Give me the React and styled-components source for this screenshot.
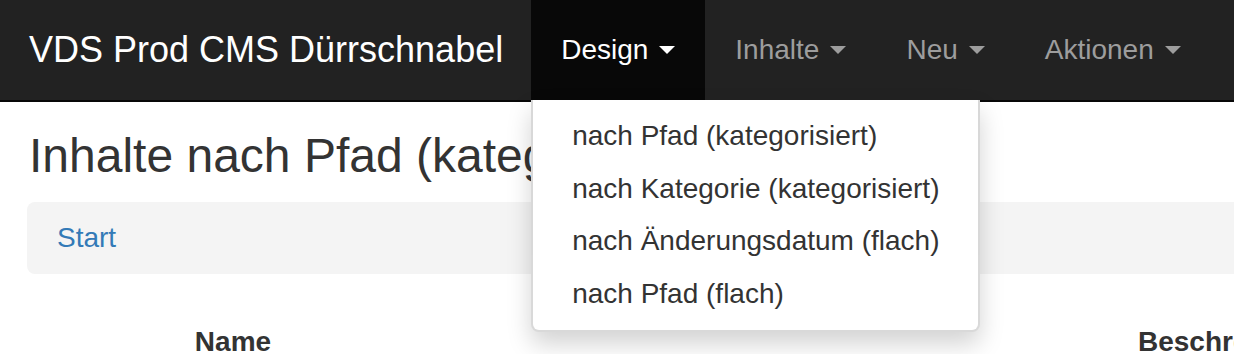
import React from "react";
import styled, { createGlobalStyle } from "styled-components";

const Global = createGlobalStyle`
  html, body { margin: 0; padding: 0; overflow: hidden; background: #fff; }
  body { font-family: "Liberation Sans", Arial, sans-serif; color: #333; }
  * { box-sizing: border-box; }
`;

const Navbar = styled.nav`
  position: relative;
  height: 102px;
  background: #222;
  border-bottom: 2px solid #080808;
  display: flex;
  align-items: stretch;
`;

const Brand = styled.a`
  display: flex;
  align-items: center;
  padding: 0 28px 0 29px;
  font-size: 36px;
  color: #fff;
  text-decoration: none;
  white-space: nowrap;
`;

const NavList = styled.ul`
  display: flex;
  margin: 0;
  padding: 0;
  list-style: none;
`;

const NavItem = styled.li`
  position: relative;
  display: flex;
  align-items: center;
  height: 100px;
  padding: 0 30px;
  font-size: 28px;
  white-space: nowrap;
  color: ${(p) => (p.$active ? "#fff" : "#9d9d9d")};
  background: ${(p) => (p.$active ? "#080808" : "transparent")};
`;

const Caret = styled.span`
  display: inline-block;
  width: 0;
  height: 0;
  margin-left: 11px;
  border-top: 8px solid currentColor;
  border-left: 8px solid transparent;
  border-right: 8px solid transparent;
`;

const Menu = styled.ul`
  position: absolute;
  top: 100px;
  left: 0;
  z-index: 10;
  margin: 0;
  padding: 10px 0;
  list-style: none;
  background: #fff;
  border: 2px solid rgba(0, 0, 0, 0.15);
  border-top: 0;
  border-radius: 0 0 8px 8px;
  box-shadow: 0 12px 24px rgba(0, 0, 0, 0.175);
`;

const MenuItem = styled.li`
  padding: 6px 38px 6px 39px;
  font-size: 28px;
  line-height: 40.6px;
  color: #333;
  white-space: nowrap;
`;

const Container = styled.main`
  padding: 0 0 0 27px;
  width: 1500px;
`;

const Title = styled.h1`
  margin: 28px 0 19px 2px;
  font-size: 48px;
  font-weight: 400;
  line-height: 1.1;
  color: #333;
`;

const Breadcrumb = styled.div`
  height: 72px;
  padding: 0 30px;
  display: flex;
  align-items: center;
  background: #f4f4f4;
  border-radius: 8px;
`;

const Crumb = styled.a`
  font-size: 28px;
  color: #337ab7;
  text-decoration: none;
`;

const TableHead = styled.div`
  display: grid;
  grid-template-columns: 412px 1fr;
  margin-top: 40px;
`;

const Th = styled.div`
  padding: 8px 16px;
  font-size: 28px;
  font-weight: 700;
  line-height: 40px;
  color: #333;
  text-align: ${(p) => p.$align || "left"};
  padding-left: ${(p) => p.$indent || 16}px;
`;

const items = [
  "nach Pfad (kategorisiert)",
  "nach Kategorie (kategorisiert)",
  "nach Änderungsdatum (flach)",
  "nach Pfad (flach)",
];

export default function App() {
  return (
    <>
      <Global />
      <Navbar>
        <Brand>VDS Prod CMS Dürrschnabel</Brand>
        <NavList>
          <NavItem $active>
            Design
            <Caret />
            <Menu>
              {items.map((t) => (
                <MenuItem key={t}>{t}</MenuItem>
              ))}
            </Menu>
          </NavItem>
          <NavItem>
            Inhalte
            <Caret />
          </NavItem>
          <NavItem>
            Neu
            <Caret />
          </NavItem>
          <NavItem>
            Aktionen
            <Caret />
          </NavItem>
        </NavList>
      </Navbar>
      <Container>
        <Title>Inhalte nach Pfad (kategorisiert)</Title>
        <Breadcrumb>
          <Crumb>Start</Crumb>
        </Breadcrumb>
        <TableHead>
          <Th $align="center">Name</Th>
          <Th $indent={699}>Beschreibung</Th>
        </TableHead>
      </Container>
    </>
  );
}
